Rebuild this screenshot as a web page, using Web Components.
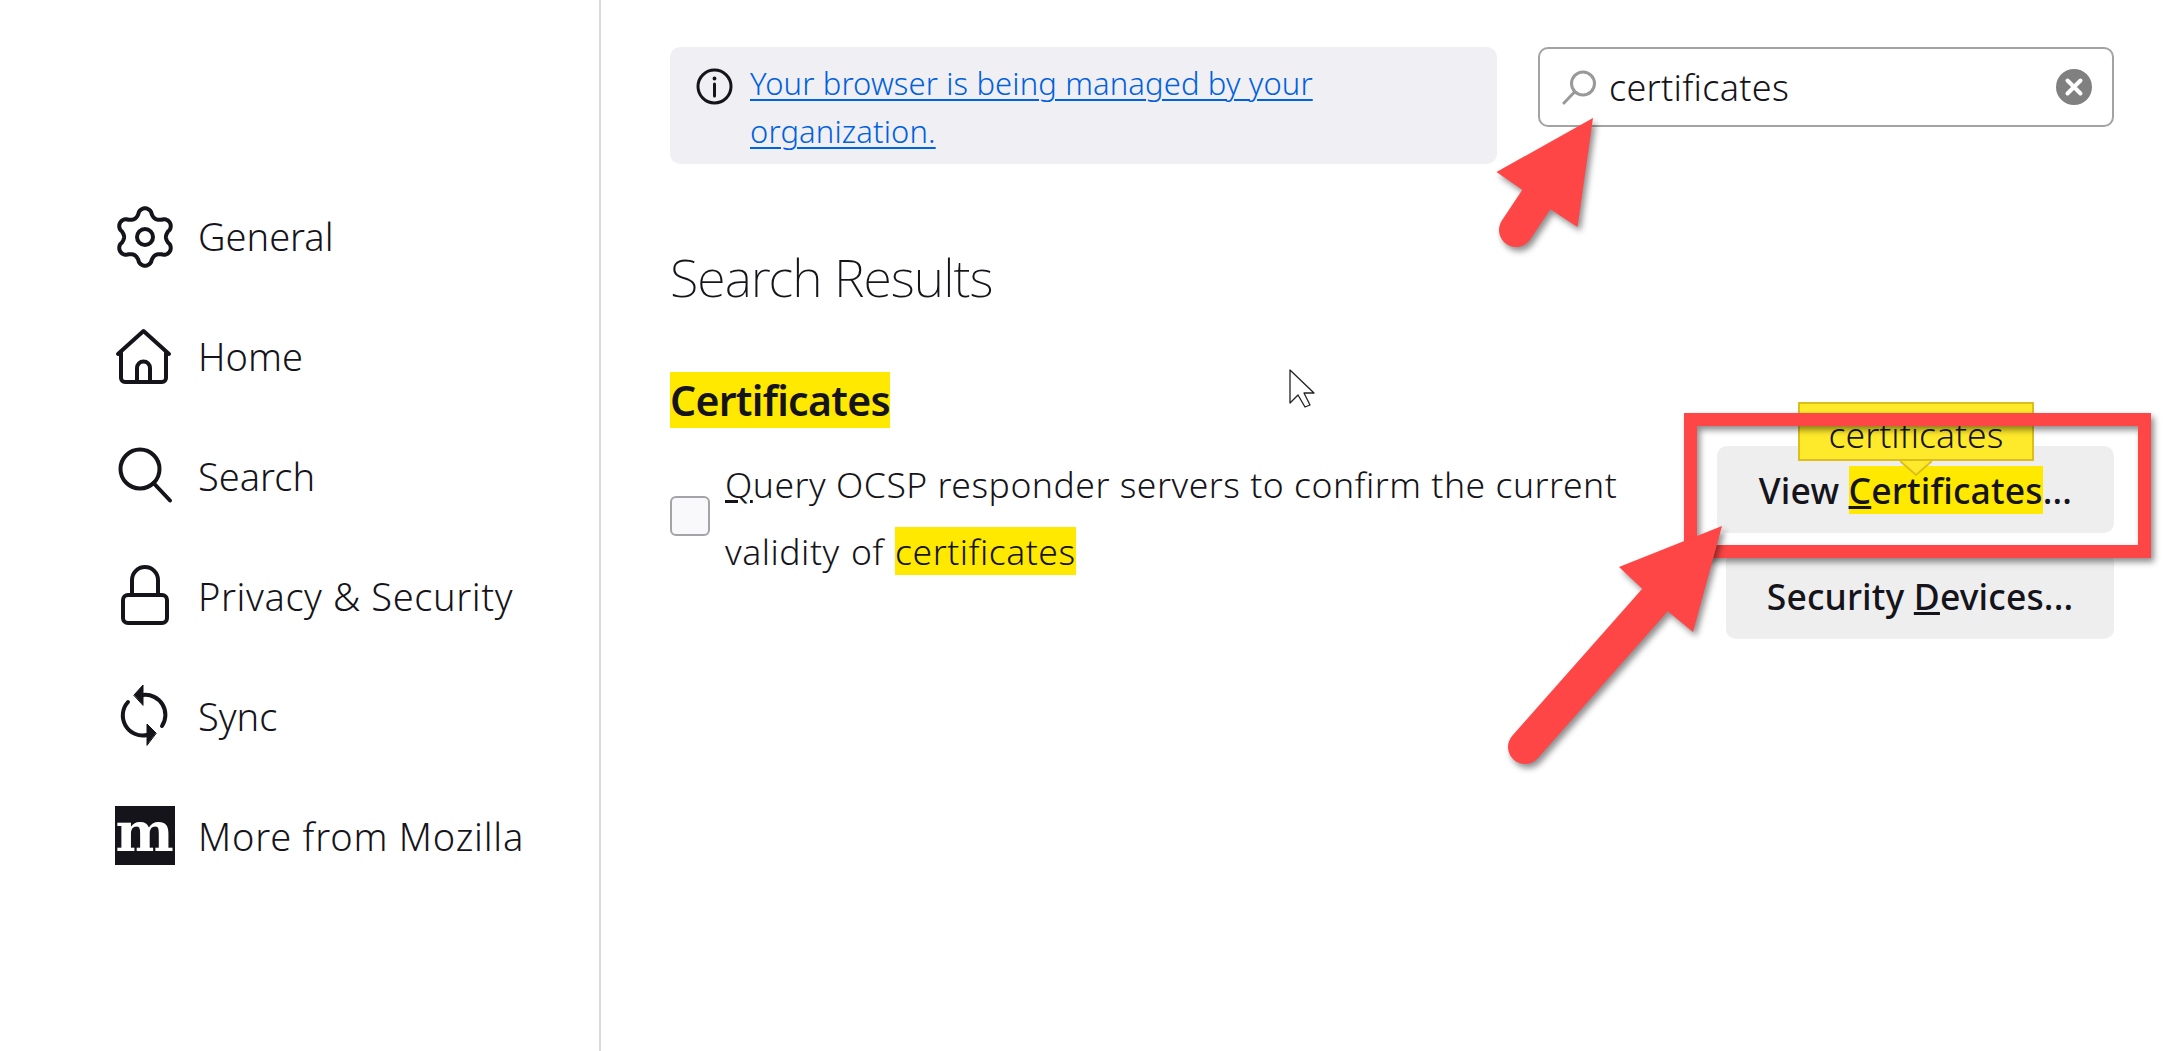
<!DOCTYPE html>
<html lang="en">
<head>
<meta charset="utf-8">
<title>Settings</title>
<style>
	html, body { margin: 0; background: #fff; }
	body { font-family: "Noto Sans", "Open Sans", sans-serif; color: #15141a; }
</style>
</head>
<body>
<pref-page>
	<pref-nav-item slot="nav"><pref-icon slot="icon" name="gear"></pref-icon>General</pref-nav-item>
	<pref-nav-item slot="nav"><pref-icon slot="icon" name="home"></pref-icon>Home</pref-nav-item>
	<pref-nav-item slot="nav"><pref-icon slot="icon" name="search"></pref-icon>Search</pref-nav-item>
	<pref-nav-item slot="nav" style="letter-spacing: .6px"><pref-icon slot="icon" name="lock"></pref-icon>Privacy &amp; Security</pref-nav-item>
	<pref-nav-item slot="nav"><pref-icon slot="icon" name="sync"></pref-icon>Sync</pref-nav-item>
	<pref-nav-item slot="nav" style="letter-spacing: .8px"><pref-icon slot="icon" name="mozilla"></pref-icon>More from Mozilla</pref-nav-item>

	<pref-topbar>
		<pref-notice>Your browser is being managed by your organization.</pref-notice>
		<pref-search value="certificates"></pref-search>
	</pref-topbar>
	<pref-title>Search Results</pref-title>
	<pref-group>
		<span slot="title"><pref-mark>Certificates</pref-mark></span>
		<pref-check slot="option"><u>Q</u>uery OCSP responder servers to confirm the current<br><span style="word-spacing: 1.5px">validity of </span><pref-mark>certificates</pref-mark></pref-check>
		<pref-button slot="action" class="view"><pref-tooltip slot="tooltip">certificates</pref-tooltip>View <pref-mark><u>C</u>ertificates</pref-mark>...</pref-button>
		<pref-button slot="action" class="devices">Security <u>D</u>evices...</pref-button>
	</pref-group>

	<pref-annotations slot="overlay"></pref-annotations>
</pref-page>

<script>
function gearPath() {
	// six soft teeth around the centre
	const points = [];
	for (let i = 0; i < 240; i++) {
		const a = i / 240 * Math.PI * 2;
		const wave = Math.cos(a * 6);
		const r = 24.8 + 3.9 * Math.sign(wave) * Math.pow(Math.abs(wave), 0.7);
		points.push((30 + r * Math.sin(a)).toFixed(2) + ' ' + (30 - r * Math.cos(a)).toFixed(2));
	}
	return 'M' + points.join('L') + 'Z';
}

const ICONS = {
	gear: `<path d="${gearPath()}"/><circle cx="30" cy="30" r="8"/>`,
	home: `<path d="M3 27L28.5 4L54 27"/><path d="M6 26V51a4 4 0 0 0 4 4H47a4 4 0 0 0 4-4V26"/><path d="M22 55V41a6.5 6.5 0 0 1 13 0V55"/>`,
	search: `<circle cx="25" cy="22" r="19.5"/><path d="M38.5 36L55 53.5"/>`,
	lock: `<path d="M17 28V13a13 13 0 0 1 26 0V28"/><rect x="8" y="28" width="44" height="28" rx="5"/>`,
	sync: `<path d="M28 8A20 20 0 0 1 47 39"/><path d="M32 48A20 20 0 0 1 13 15"/>
		<path class="solid" d="M19 8L28 -2V18Z"/><path class="solid" d="M41 46L32 37V58Z"/>`,
	mozilla: `<rect class="solid" x="0" y="-1" width="60" height="59"/>
		<text x="30" y="44" text-anchor="middle" font-family="'DejaVu Serif', serif" font-weight="700" font-size="55" fill="#fff" stroke="none">m</text>`,
};

class PrefIcon extends HTMLElement {
	constructor() {
		super();
		const root = this.attachShadow({mode: 'open'});
		root.innerHTML = `
			<style>
				:host { display: block; width: 60px; height: 60px; }
				svg { display: block; overflow: visible; fill: none; stroke: #15141a; stroke-width: 4; stroke-linecap: round; stroke-linejoin: round; }
				.solid { fill: #15141a; stroke-width: 1; }
				.solid[width] { stroke: none; }
			</style>
			<svg width="60" height="60" viewBox="0 0 60 60">${ICONS[this.getAttribute('name')]}</svg>
		`;
	}
}

class PrefPage extends HTMLElement {
	constructor() {
		super();
		this.attachShadow({mode: 'open'}).innerHTML = `
			<style>
				:host { display: flex; position: relative; width: 2169px; height: 1051px; overflow: hidden; }
				nav { box-sizing: border-box; width: 601px; flex: none; padding: 177px 0 0 115px; border-right: 2px solid #d9d9dd; }
				main { flex: 1; min-width: 0; box-sizing: border-box; padding: 47px 55px 0 69px; }
			</style>
			<nav><slot name="nav"></slot></nav>
			<main><slot></slot></main>
			<slot name="overlay"></slot>
		`;
	}
}

class PrefNavItem extends HTMLElement {
	constructor() {
		super();
		this.attachShadow({mode: 'open'}).innerHTML = `
			<style>
				:host { display: flex; align-items: center; gap: 23px; height: 120px; font-size: 38px; font-weight: 350; white-space: nowrap; }
				span { padding-bottom: 2px; }
			</style>
			<slot name="icon"></slot><span><slot></slot></span>
		`;
	}
}

class PrefTopbar extends HTMLElement {
	constructor() {
		super();
		this.attachShadow({mode: 'open'}).innerHTML = `
			<style>
				:host { display: flex; align-items: flex-start; gap: 41px; }
			</style>
			<slot></slot>
		`;
	}
}

class PrefNotice extends HTMLElement {
	constructor() {
		super();
		this.attachShadow({mode: 'open'}).innerHTML = `
			<style>
				:host { display: flex; box-sizing: border-box; width: 827px; height: 117px; flex: none; padding: 12px 20px 0 26px; gap: 17px; background: #f0f0f4; border-radius: 10px; }
				svg { flex: none; margin-top: 9px; }
				a { font-size: 31px; font-weight: 350; line-height: 48px; letter-spacing: .12px; color: #0060df; text-decoration: underline; text-underline-offset: 4px; text-decoration-thickness: 2px; width: 600px; }
			</style>
			<svg width="37" height="37" viewBox="0 0 37 37" fill="none" stroke="#15141a" stroke-width="3">
				<circle cx="18.5" cy="18.5" r="16.5"/>
				<path d="M18.5 16V28" stroke-linecap="round"/>
				<circle cx="18.5" cy="10.5" r="1.2" stroke-width="1.5" fill="#15141a"/>
			</svg>
			<a href="#"><slot></slot></a>
		`;
	}
}

class PrefSearch extends HTMLElement {
	constructor() {
		super();
		this.attachShadow({mode: 'open'}).innerHTML = `
			<style>
				:host { display: flex; align-items: center; box-sizing: border-box; flex: 1; height: 80px; padding: 0 20px 0 22px; gap: 12px; border: 2px solid #a3a3a3; border-radius: 10px; background: #fff; }
				.value { flex: 1; font-size: 36px; font-weight: 350; letter-spacing: .28px; }
				svg { flex: none; display: block; }
			</style>
			<svg width="35" height="35" viewBox="0 0 35 35" fill="none" stroke="#999" stroke-width="3">
				<circle cx="21" cy="13.5" r="11.5"/>
				<path d="M12.5 22L2 33" stroke-linecap="round"/>
			</svg>
			<span class="value">${this.getAttribute('value')}</span>
			<svg width="36" height="36" viewBox="0 0 36 36">
				<circle cx="18" cy="18" r="18" fill="#808080"/>
				<path d="M11.5 11.5L24.5 24.5M24.5 11.5L11.5 24.5" stroke="#fff" stroke-width="4" stroke-linecap="round"/>
			</svg>
		`;
	}
}

class PrefTitle extends HTMLElement {
	constructor() {
		super();
		this.attachShadow({mode: 'open'}).innerHTML = `
			<style>
				:host { display: block; margin-top: 73px; font-size: 52px; line-height: 80px; font-weight: 200; letter-spacing: -1px; }
			</style>
			<slot></slot>
		`;
	}
}

class PrefGroup extends HTMLElement {
	constructor() {
		super();
		this.attachShadow({mode: 'open'}).innerHTML = `
			<style>
				:host { display: block; margin-top: 54px; }
				.title { font-size: 41px; line-height: 58px; font-weight: 600; letter-spacing: -.7px; }
				.body { display: flex; justify-content: space-between; align-items: flex-start; margin-top: 19px; }
				.actions { display: flex; flex-direction: column; align-items: flex-end; gap: 19px; margin-top: -2px; }
			</style>
			<div class="title"><slot name="title"></slot></div>
			<div class="body">
				<slot name="option"></slot>
				<div class="actions"><slot name="action"></slot></div>
			</div>
		`;
	}
}

class PrefCheck extends HTMLElement {
	constructor() {
		super();
		this.attachShadow({mode: 'open'}).innerHTML = `
			<style>
				:host { display: flex; align-items: center; gap: 15px; width: 955px; font-size: 35.5px; font-weight: 350; line-height: 67px; letter-spacing: .52px; margin-top: 3px; }
				.box { flex: none; box-sizing: border-box; width: 40px; height: 40px; margin-top: -4px; background: #f9f9fb; border: 2px solid #a3a3a8; border-radius: 6px; }
				.label { width: 900px; }
			</style>
			<span class="box"></span>
			<span class="label"><slot></slot></span>
		`;
	}
}

class PrefMark extends HTMLElement {
	constructor() {
		super();
		// no whitespace around the slot: this host is inline and sits inside running text
		this.attachShadow({mode: 'open'}).innerHTML = `<style>:host { background: #ffe900; }</style><slot></slot>`;
	}
}

class PrefButton extends HTMLElement {
	constructor() {
		super();
		this.attachShadow({mode: 'open'}).innerHTML = `
			<style>
				:host { display: flex; align-items: center; justify-content: center; position: relative; box-sizing: border-box; height: 87px; background: #eeeeef; border-radius: 10px; font-size: 35.5px; font-weight: 550; letter-spacing: .15px; white-space: nowrap; }
				:host(.view) { width: 397px; }
				:host(.devices) { width: 388px; }
			</style>
			<slot name="tooltip"></slot>
			<span><slot></slot></span>
		`;
	}
}

class PrefTooltip extends HTMLElement {
	constructor() {
		super();
		this.attachShadow({mode: 'open'}).innerHTML = `
			<style>
				:host { position: absolute; left: 81px; top: -44px; box-sizing: border-box; width: 236px; height: 59px; background: #ffe92b; border: 2px solid #dcbf1c; font-size: 35.5px; font-weight: 350; letter-spacing: .05px; line-height: 60px; text-align: center; }
				svg { position: absolute; left: 100px; top: 57px; }
			</style>
			<slot></slot>
			<svg width="32" height="16" viewBox="0 0 32 16">
				<path d="M0 0H32L16 14Z" fill="#ffe92b"/>
				<path d="M0 0L16 14L32 0" fill="none" stroke="#dcbf1c" stroke-width="2"/>
			</svg>
		`;
	}
}

class PrefAnnotations extends HTMLElement {
	constructor() {
		super();
		this.attachShadow({mode: 'open'}).innerHTML = `
			<style>
				:host { position: absolute; inset: 0; pointer-events: none; }
				svg { display: block; }
				.mark { filter: drop-shadow(3px 4px 3px rgba(0, 0, 0, .45)); }
			</style>
			<svg width="2169" height="1051" viewBox="0 0 2169 1051">
				<path d="M1290 370V403L1298 395L1305 407L1310 405L1304 393L1314 393Z" fill="#fff" stroke="#222" stroke-width="1.3" stroke-linejoin="round"/>
				<g class="mark" fill="#ff4646" stroke="#ff4646">
					<path d="M1593 118L1496.5 172L1522.5 190L1550 209L1577.5 227Z" stroke="none"/>
					<path d="M1536 200L1516 230" stroke-width="34" stroke-linecap="round" fill="none"/>
				</g>
				<rect class="mark" x="1690.5" y="419.5" width="454" height="132" fill="none" stroke="#ff4646" stroke-width="13"/>
				<g class="mark" fill="#ff4646" stroke="#ff4646">
					<path d="M1722 526L1619 567L1642.5 589L1667.5 611L1693 632Z" stroke="none"/>
					<path d="M1655 600L1525 747" stroke-width="34" stroke-linecap="round" fill="none"/>
				</g>
			</svg>
		`;
	}
}

customElements.define('pref-icon', PrefIcon);
customElements.define('pref-page', PrefPage);
customElements.define('pref-nav-item', PrefNavItem);
customElements.define('pref-topbar', PrefTopbar);
customElements.define('pref-notice', PrefNotice);
customElements.define('pref-search', PrefSearch);
customElements.define('pref-title', PrefTitle);
customElements.define('pref-group', PrefGroup);
customElements.define('pref-check', PrefCheck);
customElements.define('pref-mark', PrefMark);
customElements.define('pref-button', PrefButton);
customElements.define('pref-tooltip', PrefTooltip);
customElements.define('pref-annotations', PrefAnnotations);
</script>
</body>
</html>
